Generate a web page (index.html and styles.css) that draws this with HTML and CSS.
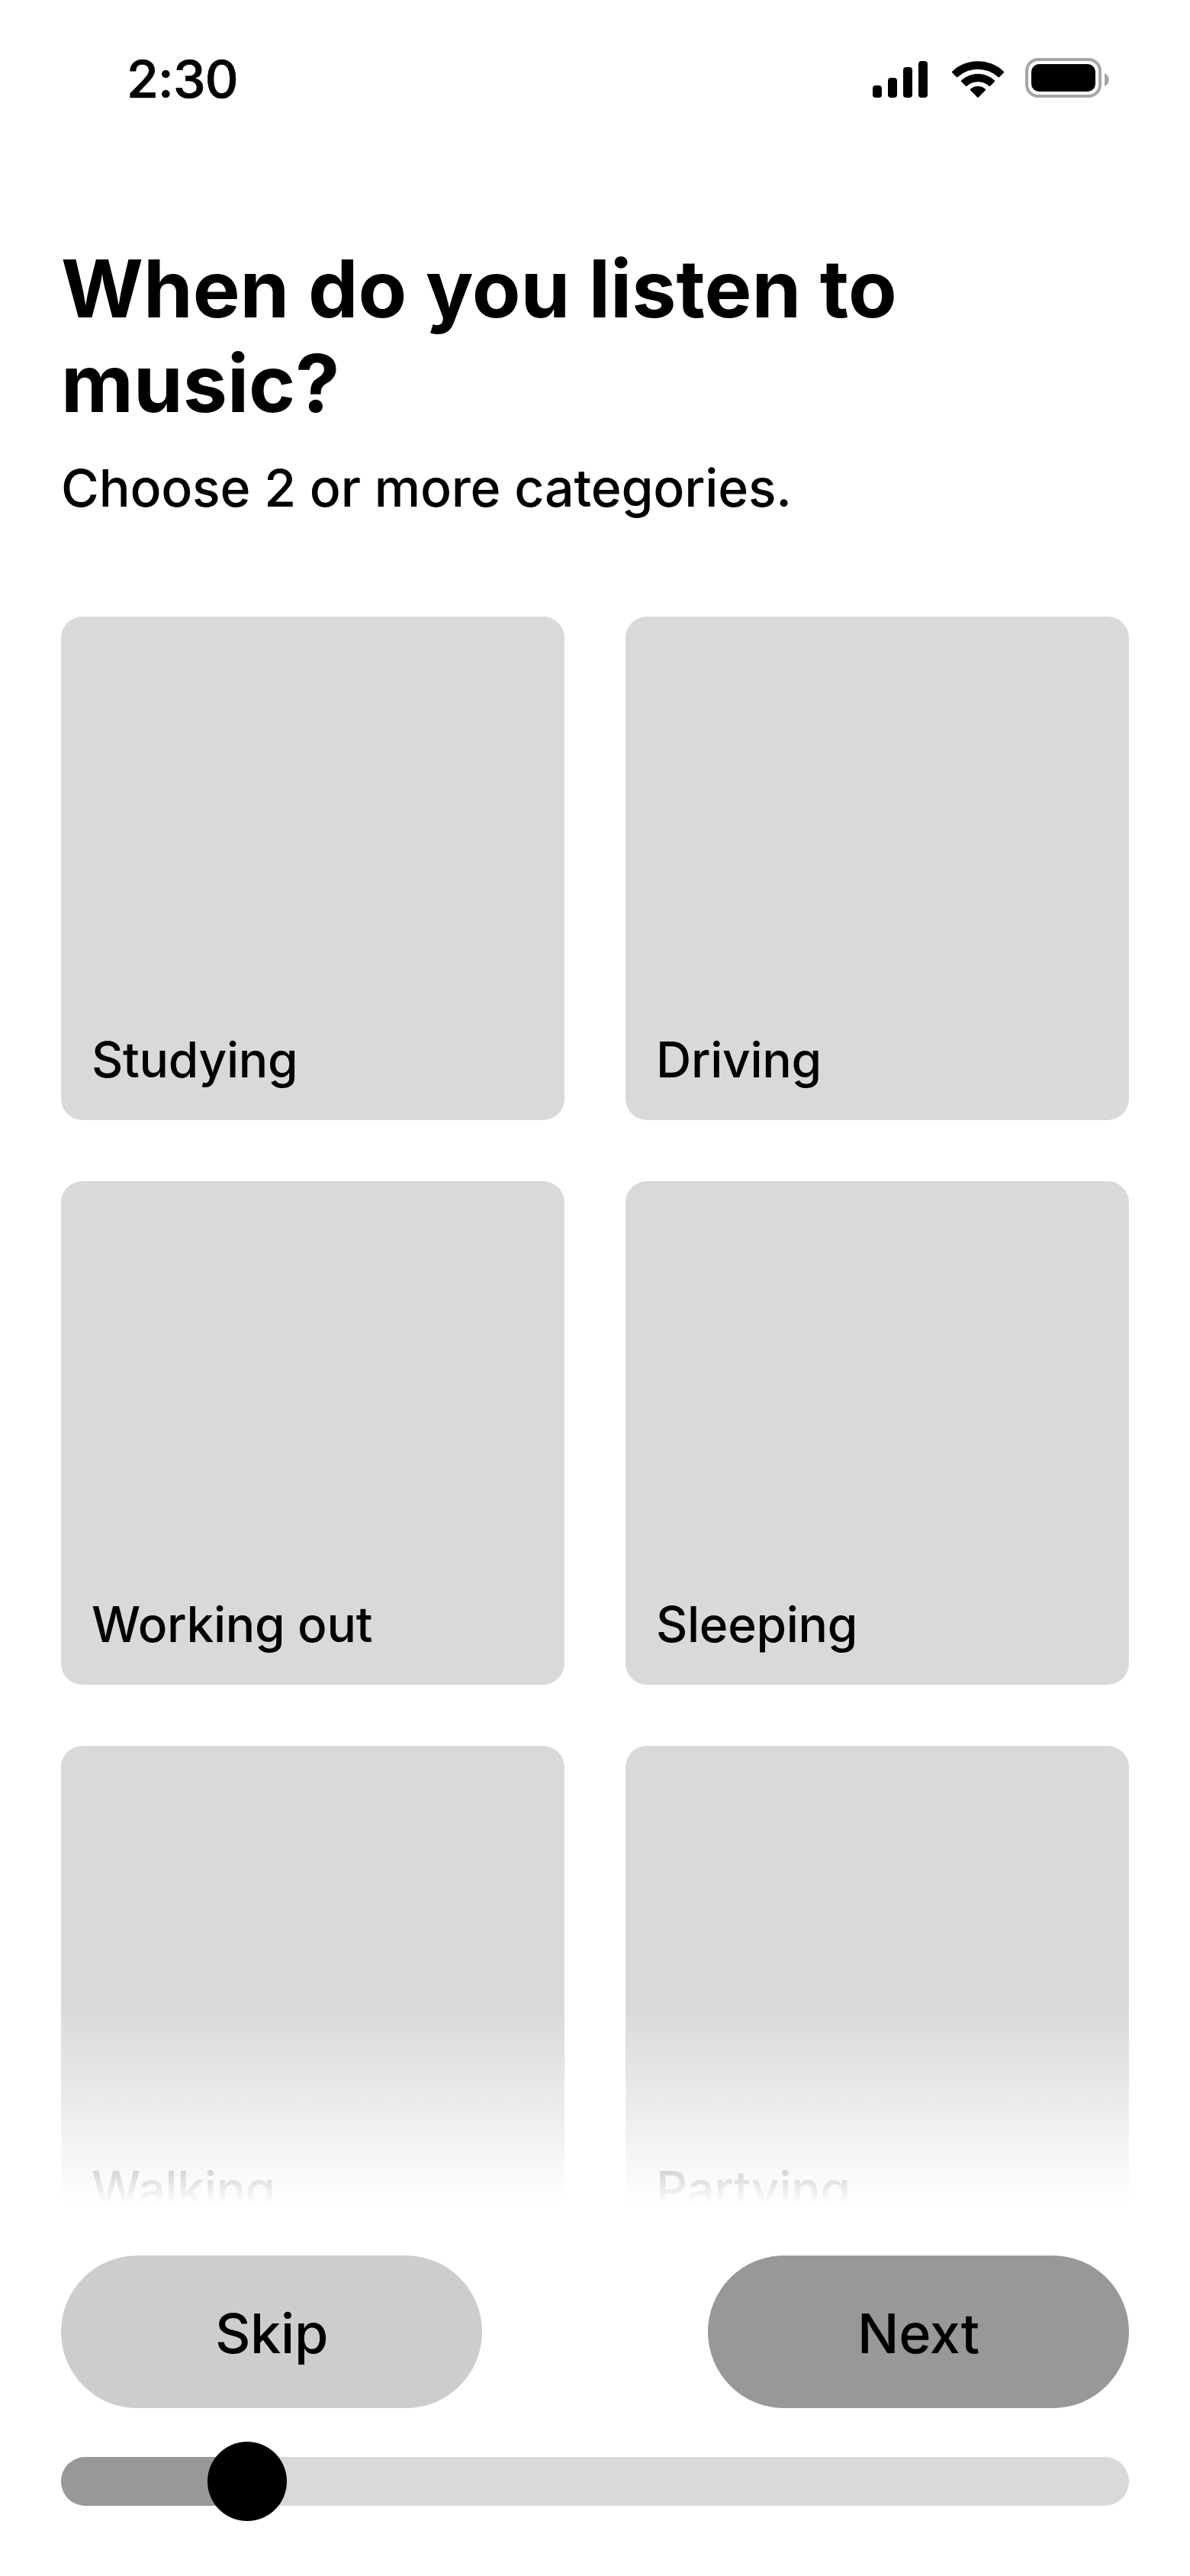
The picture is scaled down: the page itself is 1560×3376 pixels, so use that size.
FILE: index.html
```html
<!DOCTYPE html>
<html lang="en">
<head>
    <meta charset="UTF-8">
    <title>When do you listen to music?</title>
    <link rel="stylesheet" href="styles.css">
</head>
<body>
    <div class="screen">
        <div class="status-bar">
            <span class="time">2:30</span>
            <svg class="status-icons" width="310" height="52" viewBox="0 0 310 52">
                <!-- signal -->
                <rect x="0" y="36" width="12" height="16" rx="4"/>
                <rect x="20" y="26" width="12" height="26" rx="4"/>
                <rect x="40" y="12" width="12" height="40" rx="4"/>
                <rect x="60" y="4" width="12" height="48" rx="4"/>
                <!-- wifi -->
                <g transform="translate(104 4)">
                    <path d="M0.5 13.4A49 49 0 0 1 67.5 13.4Q68.6 14.4 67.5 15.5L62.4 20.8Q61.4 21.8 60.3 20.8A39.5 39.5 0 0 0 7.7 20.8Q6.6 21.8 5.6 20.8L0.5 15.5Q-0.6 14.4 0.5 13.4Z"/>
                    <path d="M12.4 25.2A32 32 0 0 1 55.6 25.2Q56.7 26.2 55.6 27.3L50.4 32.5Q49.4 33.5 48.3 32.5A22.5 22.5 0 0 0 19.7 32.5Q18.6 33.5 17.6 32.5L12.4 27.3Q11.3 26.2 12.4 25.2Z"/>
                    <path d="M24.4 36.4A15 15 0 0 1 43.6 36.4Q44.7 37.4 43.6 38.5L35 47.3Q34 48.3 33 47.3L24.4 38.5Q23.3 37.4 24.4 36.4Z"/>
                </g>
                <!-- battery -->
                <rect x="202" y="2" width="96" height="48" rx="15" fill="none" stroke="#a6a6a6" stroke-width="4"/>
                <rect x="208" y="8" width="84" height="36" rx="10"/>
                <path d="M304 20A9.2 9.2 0 0 1 304 37Z" fill="#a6a6a6"/>
            </svg>
        </div>

        <div class="header">
            <h1>When do you listen to music?</h1>
            <p>Choose 2 or more categories.</p>
        </div>

        <div class="categories">
            <div class="card">Studying</div>
            <div class="card">Driving</div>
            <div class="card">Working out</div>
            <div class="card">Sleeping</div>
            <div class="card">Walking</div>
            <div class="card">Partying</div>
        </div>

        <div class="footer">
            <div class="buttons">
                <button class="skip">Skip</button>
                <button class="next">Next</button>
            </div>
            <div class="progress">
                <div class="progress-fill"></div>
                <div class="knob"></div>
            </div>
        </div>
    </div>
</body>
</html>
```

FILE: styles.css
```css
* {
    box-sizing: border-box;
}

body {
    margin: 0;
    background-color: #fff;
    color: #000;
    font-family: Inter, "Liberation Sans", sans-serif;
    font-weight: 500;
}

.screen {
    display: flex;
    flex-direction: column;
    width: 1560px;
    height: 3376px;
    padding: 0 80px;
    overflow: hidden;
}

.status-bar {
    display: flex;
    justify-content: space-between;
    height: 316px;
    padding: 62px 26px 0 86px;
}

.time {
    font-size: 68px;
    letter-spacing: -0.8px;
    -webkit-text-stroke: 0.7px #000;
}

.status-icons {
    margin-top: 14px;
}

.header {
    height: 492px;
}

h1 {
    margin: 0;
    font-size: 104px;
    font-weight: 700;
    line-height: 124px;
}

.header p {
    margin: 34px 0 0;
    font-size: 68px;
    line-height: 82px;
    letter-spacing: -0.2px;
}

.categories {
    position: relative;
    display: grid;
    grid-template-columns: 660px 660px;
    grid-auto-rows: 660px;
    gap: 80px;
    height: 2140px;
}

/* fades the last row out above the buttons */
.categories::after {
    content: "";
    position: absolute;
    left: 0;
    right: 0;
    bottom: 0;
    height: 316px;
    background: linear-gradient(rgba(255, 255, 255, 0), #fff 256px);
}

.card {
    display: flex;
    align-items: flex-end;
    padding: 0 40px 41px;
    border-radius: 28px;
    background-color: #d9d9d9;
    font-size: 64px;
    letter-spacing: -0.3px;
}

.footer {
    padding-top: 8px;
}

.buttons {
    display: flex;
    justify-content: space-between;
}

button {
    width: 552px;
    height: 200px;
    padding: 2px 0 0;
    border: none;
    border-radius: 100px;
    color: #000;
    font-family: inherit;
    font-size: 72px;
    font-weight: 500;
    letter-spacing: -0.3px;
    cursor: pointer;
}

.skip {
    background-color: #cdcdcd;
}

.next {
    background-color: #989898;
}

.progress {
    display: flex;
    align-items: center;
    height: 64px;
    margin-top: 64px;
    border-radius: 32px;
    background-color: #d9d9d9;
}

.progress-fill {
    width: 244px;
    height: 64px;
    border-radius: 32px 0 0 32px;
    background-color: #989898;
}

.knob {
    flex: none;
    width: 104px;
    height: 104px;
    margin-left: -52px;
    border-radius: 50%;
    background-color: #000;
}
```
